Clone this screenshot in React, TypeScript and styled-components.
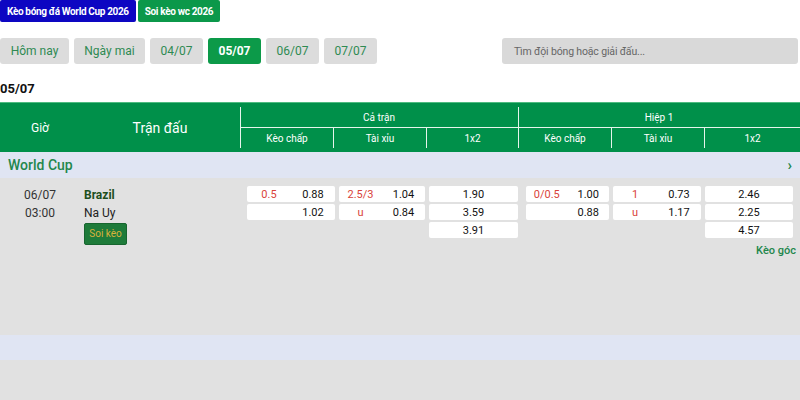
import React from "react";
import styled, { createGlobalStyle } from "styled-components";

const Global = createGlobalStyle`
  html, body { margin: 0; padding: 0; background: #ffffff; }
  body { font-family: Roboto, "Noto Sans", Arial, sans-serif; color: #222; }
  * { box-sizing: border-box; }
`;

const Page = styled.div`
  width: 800px;
  height: 400px;
  overflow: hidden;
  background: #ffffff;
`;

const TopBar = styled.div`
  display: flex;
  gap: 2px;
`;

const TagButton = styled.div<{ $tone: "blue" | "green" }>`
  height: 22px;
  padding: 0 7px;
  display: flex;
  align-items: center;
  font-size: 10px;
  letter-spacing: -0.35px;
  font-weight: 700;
  color: #fff;
  border-radius: 2px;
  background: ${(p) => (p.$tone === "blue" ? "#0d06c2" : "#0b984a")};
`;

const FilterRow = styled.div`
  margin-top: 16px;
  display: flex;
  justify-content: space-between;
  height: 26px;
  padding-right: 2px;
`;

const DateTabs = styled.div`
  display: flex;
  gap: 5px;
`;

const DateButton = styled.div<{ $active?: boolean; $w: number }>`
  width: ${(p) => p.$w}px;
  height: 26px;
  display: flex;
  align-items: center;
  justify-content: center;
  font-size: 12px;
  border-radius: 3px;
  background: ${(p) => (p.$active ? "#0c9a49" : "#dcdcdc")};
  color: ${(p) => (p.$active ? "#ffffff" : "#2e8a52")};
  font-weight: ${(p) => (p.$active ? 700 : 400)};
`;

const Search = styled.div`
  width: 296px;
  height: 26px;
  border-radius: 3px;
  background: #d9d9d9;
  display: flex;
  align-items: center;
  padding-left: 12px;
  font-size: 10.5px;
  letter-spacing: -0.15px;
  color: #666;
`;

const DayTitle = styled.div`
  margin-top: 18px;
  height: 20px;
  font-size: 13px;
  font-weight: 700;
  color: #111;
  line-height: 14px;
`;

const TableHead = styled.div`
  height: 50px;
  background: #00904a;
  border-top: 1px solid #4dbb80;
  display: grid;
  grid-template-columns: 80px 160px 278px 1fr;
  padding: 4px 0;
  color: #fff;
`;

const HeadCell = styled.div<{ $size: number }>`
  display: flex;
  align-items: center;
  justify-content: center;
  font-size: ${(p) => p.$size}px;
`;

const Group = styled.div`
  border-left: 1px solid #e6f4ec;
  display: grid;
  grid-template-rows: 21px 20px;
`;

const GroupTitle = styled.div`
  display: flex;
  align-items: center;
  justify-content: center;
  font-size: 10px;
  border-bottom: 1px solid #e6f4ec;
  margin-left: -1px;
`;

const SubRow = styled.div`
  display: grid;
  grid-template-columns: 92px 93px 1fr;
`;

const SubCell = styled.div`
  display: flex;
  align-items: center;
  justify-content: center;
  font-size: 10px;
  & + & {
    border-left: 1px solid #e6f4ec;
  }
`;

const LeagueBar = styled.div`
  height: 26px;
  background: #e0e5f3;
  display: flex;
  align-items: center;
  justify-content: space-between;
  padding: 0 8px;
  color: #23874c;
`;

const LeagueName = styled.div`
  font-size: 14px;
  font-weight: 500;
`;

const Chevron = styled.div`
  font-size: 15px;
  font-weight: 700;
  line-height: 1;
`;

const MatchArea = styled.div`
  height: 157px;
  background: #e1e1e1;
  display: grid;
  grid-template-columns: 80px 160px 1fr;
  padding-top: 8px;
`;

const TimeCol = styled.div`
  display: flex;
  flex-direction: column;
  align-items: center;
  font-size: 12px;
  color: #333;
  line-height: 18px;
`;

const TeamCol = styled.div`
  display: flex;
  flex-direction: column;
  align-items: flex-start;
  padding-left: 4px;
  font-size: 12px;
  line-height: 18px;
`;

const Team = styled.div<{ $home?: boolean }>`
  color: ${(p) => (p.$home ? "#1d4f1d" : "#222")};
  font-weight: ${(p) => (p.$home ? 700 : 400)};
`;

const SoiButton = styled.div`
  margin-top: 1px;
  width: 43px;
  height: 22px;
  background: #1e7b3a;
  border: 1px solid #17652f;
  border-radius: 2px;
  color: #d8b23a;
  font-size: 10px;
  display: flex;
  align-items: center;
  justify-content: center;
`;

const OddsWrap = styled.div`
  display: flex;
  flex-direction: column;
`;

const OddsGrid = styled.div`
  display: grid;
  grid-template-columns: 88px 86px 89px 87px 88px 88px;
  column-gap: 4px;
  padding-left: 7px;
  & > :nth-child(6n + 4) {
    margin-left: 4px;
  }
  row-gap: 2px;
  grid-auto-rows: 16px;
`;

const OddsCell = styled.div<{ $empty?: boolean }>`
  background: ${(p) => (p.$empty ? "transparent" : "#ffffff")};
  border-radius: 2px;
  display: grid;
  grid-template-columns: 1fr 1fr;
  align-items: center;
  font-size: 11px;
  color: #111;
`;

const Single = styled.div`
  grid-column: 1 / 3;
  text-align: center;
`;

const Line = styled.div`
  text-align: center;
  color: #d9433a;
`;

const Price = styled.div`
  text-align: center;
`;

const CornerLink = styled.div`
  margin-top: 6px;
  align-self: flex-end;
  padding-right: 4px;
  font-size: 11px;
  font-weight: 500;
  color: #23874c;
`;

const BlankLeague = styled.div`
  height: 25px;
  background: #e0e5f3;
`;

const Rest = styled.div`
  height: 40px;
  background: #e1e1e1;
`;

type Cell =
  | { kind: "pair"; line?: string; price: string }
  | { kind: "single"; price: string }
  | { kind: "empty" };

const rows: Cell[][] = [
  [
    { kind: "pair", line: "0.5", price: "0.88" },
    { kind: "pair", line: "2.5/3", price: "1.04" },
    { kind: "single", price: "1.90" },
    { kind: "pair", line: "0/0.5", price: "1.00" },
    { kind: "pair", line: "1", price: "0.73" },
    { kind: "single", price: "2.46" },
  ],
  [
    { kind: "pair", price: "1.02" },
    { kind: "pair", line: "u", price: "0.84" },
    { kind: "single", price: "3.59" },
    { kind: "pair", price: "0.88" },
    { kind: "pair", line: "u", price: "1.17" },
    { kind: "single", price: "2.25" },
  ],
  [
    { kind: "empty" },
    { kind: "empty" },
    { kind: "single", price: "3.91" },
    { kind: "empty" },
    { kind: "empty" },
    { kind: "single", price: "4.57" },
  ],
];

const dates = [
  { label: "Hôm nay", w: 69 },
  { label: "Ngày mai", w: 71 },
  { label: "04/07", w: 53 },
  { label: "05/07", w: 53, active: true },
  { label: "06/07", w: 53 },
  { label: "07/07", w: 53 },
];

export default function App() {
  return (
    <Page>
      <Global />
      <TopBar>
        <TagButton $tone="blue">Kèo bóng đá World Cup 2026</TagButton>
        <TagButton $tone="green">Soi kèo wc 2026</TagButton>
      </TopBar>
      <FilterRow>
        <DateTabs>
          {dates.map((d) => (
            <DateButton key={d.label} $w={d.w} $active={d.active}>
              {d.label}
            </DateButton>
          ))}
        </DateTabs>
        <Search>Tìm đội bóng hoặc giải đấu...</Search>
      </FilterRow>
      <DayTitle>05/07</DayTitle>
      <TableHead>
        <HeadCell $size={12}>Giờ</HeadCell>
        <HeadCell $size={14}>Trận đấu</HeadCell>
        {["Cả trận", "Hiệp 1"].map((g) => (
          <Group key={g}>
            <GroupTitle>{g}</GroupTitle>
            <SubRow>
              <SubCell>Kèo chấp</SubCell>
              <SubCell>Tài xỉu</SubCell>
              <SubCell>1x2</SubCell>
            </SubRow>
          </Group>
        ))}
      </TableHead>
      <LeagueBar>
        <LeagueName>World Cup</LeagueName>
        <Chevron>›</Chevron>
      </LeagueBar>
      <MatchArea>
        <TimeCol>
          <div>06/07</div>
          <div>03:00</div>
        </TimeCol>
        <TeamCol>
          <Team $home>Brazil</Team>
          <Team>Na Uy</Team>
          <SoiButton>Soi kèo</SoiButton>
        </TeamCol>
        <OddsWrap>
          <OddsGrid>
            {rows.flatMap((r, ri) =>
              r.map((c, ci) => {
                const key = `${ri}-${ci}`;
                if (c.kind === "empty") return <OddsCell key={key} $empty />;
                if (c.kind === "single")
                  return (
                    <OddsCell key={key}>
                      <Single>{c.price}</Single>
                    </OddsCell>
                  );
                return (
                  <OddsCell key={key}>
                    <Line>{c.line ?? ""}</Line>
                    <Price>{c.price}</Price>
                  </OddsCell>
                );
              })
            )}
          </OddsGrid>
          <CornerLink>Kèo góc</CornerLink>
        </OddsWrap>
      </MatchArea>
      <BlankLeague />
      <Rest />
    </Page>
  );
}
